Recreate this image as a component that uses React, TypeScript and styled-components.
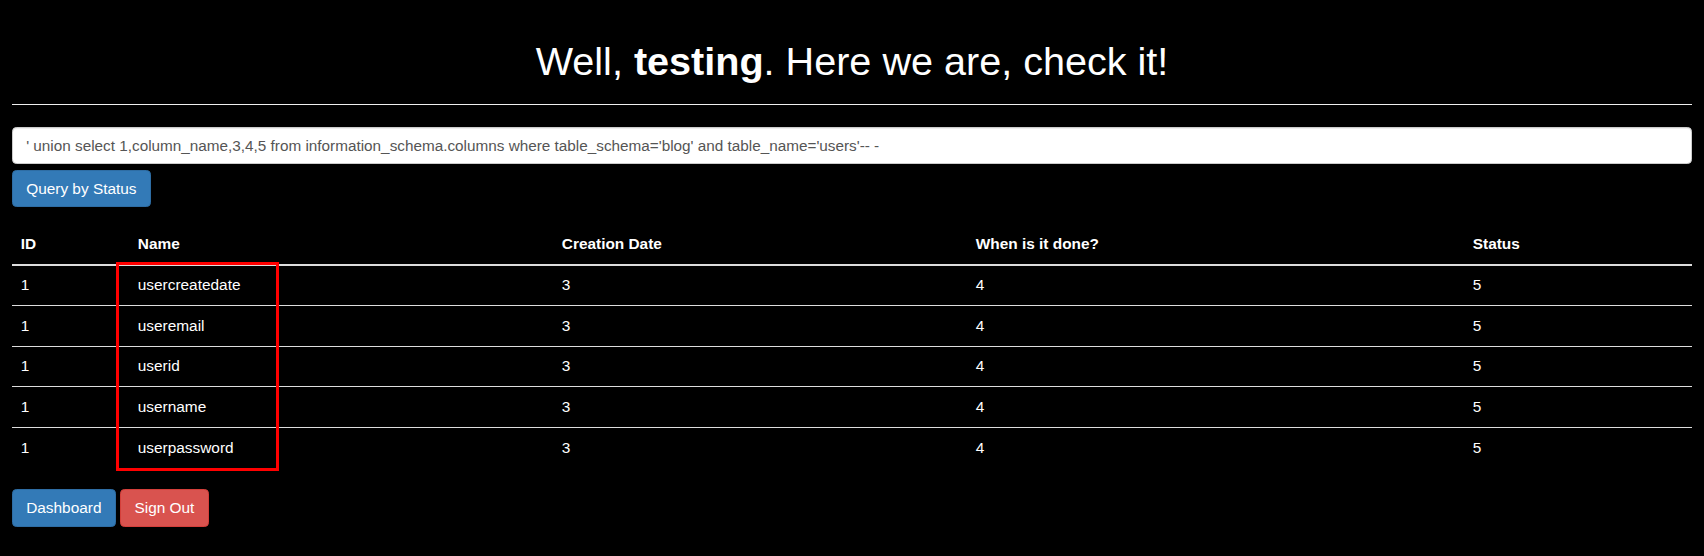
import React from "react";
import styled, { createGlobalStyle } from "styled-components";

const Global = createGlobalStyle`
  html, body { margin: 0; padding: 0; background: #000; }
  body {
    font-family: "Liberation Sans", Arial, Helvetica, sans-serif;
    font-size: 15.4px;
    line-height: 1.42857;
    color: #fff;
  }
  * { box-sizing: border-box; }
`;

const Page = styled.div`
  padding: 0 12px;
  position: relative;
`;

const Header = styled.div`
  margin: 39.5px 0 22px;
  padding-bottom: 9.9px;
  border-bottom: 1.1px solid #eee;
`;

const Title = styled.h1`
  margin: 0 0 11px;
  font-size: 39.6px;
  font-weight: 400;
  line-height: 1.1;
  text-align: center;
  color: #fff;
  b { font-weight: 700; }
`;

const QueryInput = styled.input`
  display: block;
  width: 100%;
  height: 37.4px;
  padding: 6.6px 13.2px;
  font-family: inherit;
  font-size: 15.3px;
  line-height: 1.42857;
  color: #555;
  background: #fff;
  border: 1.1px solid #ccc;
  border-radius: 4.4px;
  box-shadow: inset 0 1px 1px rgba(0, 0, 0, 0.075);
  outline: none;
`;

const Button = styled.button<{ $variant: "primary" | "danger" }>`
  display: inline-block;
  padding: 6.6px 13.2px;
  font-family: inherit;
  font-size: 15.4px;
  line-height: 1.42857;
  color: #fff;
  border-radius: 4.4px;
  cursor: pointer;
  background: ${(p) => (p.$variant === "primary" ? "#337ab7" : "#d9534f")};
  border: 1.1px solid ${(p) => (p.$variant === "primary" ? "#2e6da4" : "#d43f3a")};
`;

const QueryRow = styled.div`
  margin-top: 5.6px;
`;

const TableWrap = styled.div`
  position: relative;
  margin-top: 16.8px;
  margin-bottom: 22px;
`;

const Table = styled.table`
  width: 100%;
  border-collapse: collapse;
  border-spacing: 0;
  table-layout: fixed;
`;

const Th = styled.th<{ $w: number }>`
  width: ${(p) => p.$w}px;
  padding: 8.8px;
  line-height: 22px;
  text-align: left;
  font-weight: 700;
  color: #fff;
  border-bottom: 2.2px solid #ddd;
`;

const Td = styled.td`
  padding: 8.8px;
  line-height: 22px;
  color: #fff;
  border-top: 1.1px solid #ddd;
  vertical-align: top;
`;

const Highlight = styled.div`
  position: absolute;
  left: 104px;
  top: 38.5px;
  width: 163px;
  height: 209px;
  border: 3px solid #ff0000;
  pointer-events: none;
`;

const Actions = styled.div`
  display: flex;
  gap: 4.6px;
`;

const columns = [
  { label: "ID", w: 117 },
  { label: "Name", w: 424 },
  { label: "Creation Date", w: 414 },
  { label: "When is it done?", w: 497 },
  { label: "Status", w: 228 },
];

const rows = ["usercreatedate", "useremail", "userid", "username", "userpassword"];

export default function App() {
  return (
    <>
      <Global />
      <Page>
        <Header>
          <Title>
            Well, <b>testing</b>. Here we are, check it!
          </Title>
        </Header>
        <QueryInput
          readOnly
          value={"' union select 1,column_name,3,4,5 from information_schema.columns where table_schema='blog' and table_name='users'-- -"}
        />
        <QueryRow>
          <Button $variant="primary">Query by Status</Button>
        </QueryRow>
        <TableWrap>
          <Table>
            <thead>
              <tr>
                {columns.map((c) => (
                  <Th key={c.label} $w={c.w}>
                    {c.label}
                  </Th>
                ))}
              </tr>
            </thead>
            <tbody>
              {rows.map((r) => (
                <tr key={r}>
                  <Td>1</Td>
                  <Td>{r}</Td>
                  <Td>3</Td>
                  <Td>4</Td>
                  <Td>5</Td>
                </tr>
              ))}
            </tbody>
          </Table>
          <Highlight />
        </TableWrap>
        <Actions>
          <Button $variant="primary">Dashboard</Button>
          <Button $variant="danger">Sign Out</Button>
        </Actions>
      </Page>
    </>
  );
}
